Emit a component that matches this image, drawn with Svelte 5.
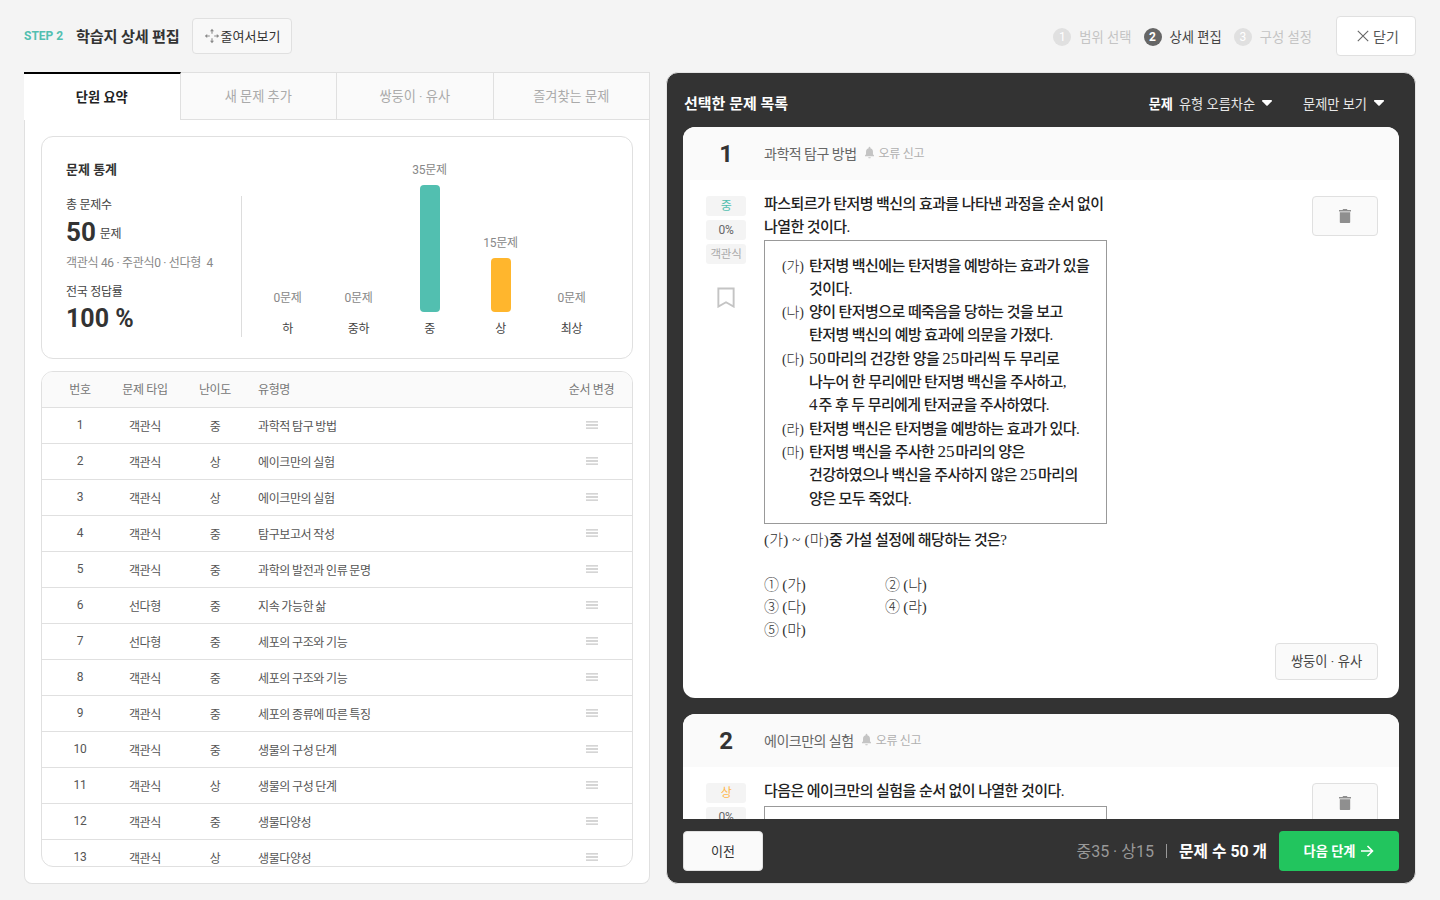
<script>
  const rows = [
    [1,'객관식','중','과학적 탐구 방법'],[2,'객관식','상','에이크만의 실험'],[3,'객관식','상','에이크만의 실험'],
    [4,'객관식','중','탐구보고서 작성'],[5,'객관식','중','과학의 발전과 인류 문명'],[6,'선다형','중','지속 가능한 삶'],
    [7,'선다형','중','세포의 구조와 기능'],[8,'객관식','중','세포의 구조와 기능'],[9,'객관식','중','세포의 종류에 따른 특징'],
    [10,'객관식','중','생물의 구성 단계'],[11,'객관식','상','생물의 구성 단계'],[12,'객관식','중','생물다양성'],[13,'객관식','상','생물다양성']
  ];
  const bars = [['0문제',0,'하',''],['0문제',0,'중하',''],['35문제',127,'중','#52bfb0'],['15문제',54,'상','#ffb62d'],['0문제',0,'최상','']];
  const tabs = ['단원 요약','새 문제 추가','쌍둥이 · 유사','즐겨찾는 문제'];
  const passage = [
    ['(가)',['탄저병 백신에는 탄저병을 예방하는 효과가 있을','것이다.']],
    ['(나)',['양이 탄저병으로 떼죽음을 당하는 것을 보고','탄저병 백신의 예방 효과에 의문을 가졌다.']],
    ['(다)',['50마리의 건강한 양을 25마리씩 두 무리로','나누어 한 무리에만 탄저병 백신을 주사하고,','4주 후 두 무리에게 탄저균을 주사하였다.']],
    ['(라)',['탄저병 백신은 탄저병을 예방하는 효과가 있다.']],
    ['(마)',['탄저병 백신을 주사한 25마리의 양은','건강하였으나 백신을 주사하지 않은 25마리의','양은 모두 죽었다.']]
  ];
  const choices = ['① (가)','② (나)','③ (다)','④ (라)','⑤ (마)'];
  const parts = (s) => s.split(/(\d+)/).filter(Boolean).map((t) => ({ t, num: /^\d+$/.test(t) }));
</script>

{#snippet bell()}
  <svg class="bell" viewBox="0 0 12 12" width="13" height="13"><path d="M6 .8c.5 0 .8.3.8.8v.4c1.600.4 2.400 1.700 2.400 3.300v2.200l1 1.300v.7H1.800v-.7l1-1.300V5.300c0-1.600.8-2.900 2.400-3.300v-.4c0-.5.3-.8.8-.8zM4.800 10.300h2.400C7.100 11 6.600 11.400 6 11.400s-1.100-.4-1.200-1.100z" fill="#c4c4c4"/></svg>
{/snippet}
{#snippet trash()}
  <svg viewBox="0 0 14 16" width="14" height="16"><path d="M4.800 1h4.400v1H13v1.500H1V2h3.800zM1.800 4.200h10.400V14c0 .6-.4 1-1 1H2.800c-.6 0-1-.4-1-1z" fill="#8f8f8f"/></svg>
{/snippet}
{#snippet caret()}
  <svg viewBox="0 0 12 8" width="12" height="8"><path d="M1.800 1h8.400c.7 0 1 .7.6 1.200L6.700 6.400c-.4.400-1 .4-1.400 0L1.200 2.200C.8 1.700 1.100 1 1.800 1z" fill="#fff"/></svg>
{/snippet}
{#snippet grip()}
  <svg class="grip" viewBox="0 0 12 8" width="12" height="8" fill="none" stroke="#c8c8c8" stroke-width="1.300"><path d="M0 .8h12M0 4h12M0 7.200h12"/></svg>
{/snippet}

<div class="page">
  <header class="top">
    <div class="top-left">
      <span class="step">STEP 2</span>
      <h1>학습지 상세 편집</h1>
      <button class="zoom-btn">
        <svg viewBox="0 0 16 16" width="16" height="16" fill="none" stroke="#8a8a8a" stroke-width="1.100"><path d="M8 .8 10 3.200H6zM8 15.200 6 12.800h4zM.8 8 3.200 6v4zM15.200 8 12.800 10V6z" fill="#8a8a8a" stroke="none"/><path d="M8 3v2.800M8 10.200V13M3 8h2.800M10.200 8H13"/></svg>
        줄여서보기
      </button>
    </div>
    <div class="top-right">
      <div class="stepper">
        <span class="st off"><i>1</i>범위 선택</span>
        <span class="st on"><i>2</i>상세 편집</span>
        <span class="st off"><i>3</i>구성 설정</span>
      </div>
      <button class="close">
        <svg viewBox="0 0 12 12" width="12" height="12" fill="none" stroke="#666" stroke-width="1.100"><path d="M.8.800l10.400 10.400M11.200.800.800 11.200"/></svg>
        닫기
      </button>
    </div>
  </header>

  <main class="main">
    <section class="left">
      <nav class="tabs">
        {#each tabs as t, i}
          <div class="tab" class:active={i === 0}>{t}</div>
        {/each}
      </nav>
      <div class="left-body">
        <div class="stats">
          <div class="stats-l">
            <h2>문제 통계</h2>
            <div class="lbl">총 문제수</div>
            <div class="big"><b>50</b><span>문제</span></div>
            <div class="sub">객관식 46 · 주관식0 · 선다형 &nbsp;4</div>
            <div class="lbl rate">전국 정답률</div>
            <div class="big pct"><b>100 %</b></div>
          </div>
          <div class="chart">
            {#each bars as b}
              <div class="col">
                <div class="val" class:zero={!b[1]}>{b[0]}</div>
                {#if b[1]}<div class="bar" style="height:{b[1]}px;background:{b[3]}"></div>{/if}
                <div class="name">{b[2]}</div>
              </div>
            {/each}
          </div>
        </div>
        <div class="table">
          <div class="tr th">
            <div>번호</div><div>문제 타입</div><div>난이도</div><div class="l">유형명</div><div>순서 변경</div>
          </div>
          {#each rows as r}
            <div class="tr">
              <div>{r[0]}</div><div>{r[1]}</div><div>{r[2]}</div><div class="l">{r[3]}</div>
              <div class="drag">{@render grip()}</div>
            </div>
          {/each}
        </div>
      </div>
    </section>

    <section class="right">
      <div class="r-head">
        <h2>선택한 문제 목록</h2>
        <div class="r-ctrl">
          <span class="sort"><b>문제</b><span>유형 오름차순</span>{@render caret()}</span>
          <span class="sort"><span>문제만 보기</span>{@render caret()}</span>
        </div>
      </div>
      <div class="scroll">
        <article class="q">
          <div class="q-head">
            <div class="no">1</div>
            <span class="ty">과학적 탐구 방법</span>
            {@render bell()}
            <span class="rep">오류 신고</span>
          </div>
          <div class="q-body first">
            <div class="meta">
              <span class="badge teal">중</span>
              <span class="badge">0%</span>
              <span class="badge gray">객관식</span>
              <svg class="mark" viewBox="0 0 20 22" width="20" height="21" fill="none" stroke="#c4c4c4" stroke-width="2"><path d="M2 1.500h16v19l-8-4.500-8 4.500z"/></svg>
            </div>
            <div class="content">
              <p class="qt">파스퇴르가 탄저병 백신의 효과를 나타낸 과정을 순서 없이<br/>나열한 것이다.</p>
              <div class="box">
                {#each passage as p}
                  <div class="pi">
                    <span class="pl">{p[0]}</span>
                    <div>{#each p[1] as l}<div>{#each parts(l) as x}{#if x.num}<span class="num">{x.t}</span>{:else}{x.t}{/if}{/each}</div>{/each}</div>
                  </div>
                {/each}
              </div>
              <p class="ask"><span class="pl wide">(가) ~ (마)</span>중 가설 설정에 해당하는 것은?</p>
              <div class="choices">
                {#each choices as c}<div class="pl">{c}</div>{/each}
              </div>
            </div>
            <div class="acts">
              <button class="del">{@render trash()}</button>
              <button class="twin">쌍둥이 · 유사</button>
            </div>
          </div>
        </article>
        <article class="q">
          <div class="q-head">
            <div class="no">2</div>
            <span class="ty">에이크만의 실험</span>
            {@render bell()}
            <span class="rep">오류 신고</span>
          </div>
          <div class="q-body">
            <div class="meta">
              <span class="badge orange">상</span>
              <span class="badge">0%</span>
            </div>
            <div class="content">
              <p class="qt">다음은 에이크만의 실험을 순서 없이 나열한 것이다.</p>
              <div class="box second"></div>
            </div>
            <div class="acts">
              <button class="del">{@render trash()}</button>
            </div>
          </div>
        </article>
      </div>
      <div class="r-foot">
        <button class="prev">이전</button>
        <div class="foot-r">
          <span class="cnt">중35 · 상15</span>
          <span class="pipe"></span>
          <b class="tot">문제 수 50 개</b>
          <button class="next">다음 단계
            <svg viewBox="0 0 14 14" width="14" height="14" fill="none" stroke="#fff" stroke-width="1.600"><path d="M1 7h11.500M7.500 2l5 5-5 5"/></svg>
          </button>
        </div>
      </div>
    </section>
  </main>
</div>

<style>
  :global(body) { margin: 0; background: #f4f4f4; }
  .page { width: 1440px; height: 900px; overflow: hidden; display: flex; flex-direction: column; font-family: Roboto, "Noto Sans CJK KR", sans-serif; color: #333; }
  button { font-family: inherit; cursor: pointer; }
  h1, h2, p { margin: 0; }

  .top { height: 72px; padding: 0 24px; box-sizing: border-box; display: flex; justify-content: space-between; align-items: center; }
  .top-left { display: flex; align-items: center; }
  .step { font-size: 12px; font-weight: 700; color: #52bfb0; width: 52px; }
  h1 { font-size: 15.200px; font-weight: 700; color: #333; letter-spacing: -0.2px; width: 116px; padding-bottom: 2px; }
  .zoom-btn { width: 100px; height: 36px; box-sizing: border-box; background: #f8f8f8; border: 1px solid #e0e0e0; border-radius: 4px; font-size: 13px; color: #333; display: flex; align-items: center; justify-content: center; gap: 1px; padding: 0 0 1px; }
  .top-right { display: flex; align-items: center; gap: 24px; }
  .stepper { display: flex; gap: 12px; margin-top: 1px; }
  .st { display: flex; align-items: center; gap: 8px; font-size: 13.300px; }
  .st i { width: 18px; height: 18px; border-radius: 50%; font-style: normal; font-size: 12px; display: flex; align-items: center; justify-content: center; color: #fff; }
  .st.off { color: #c4c4c4; }
  .st.off i { background: #e0e0e0; }
  .st.on { color: #444; }
  .st.on i { background: #666; font-weight: 700; }
  .close { width: 80px; height: 40px; box-sizing: border-box; background: #fff; border: 1px solid #e0e0e0; border-radius: 4px; font-size: 14px; color: #555; display: flex; align-items: center; justify-content: center; gap: 4px; padding: 0 0 1px 4px; }

  .main { display: flex; gap: 16px; padding: 0 24px; height: 812px; }
  .left { width: 626px; box-sizing: border-box; background: #fff; border: 1px solid #e0e0e0; border-top: 0; border-radius: 0 0 8px 8px; display: flex; flex-direction: column; }
  .tabs { display: grid; grid-template-columns: repeat(4, 1fr); margin: 0 -1px; height: 48px; }
  .tab { display: flex; align-items: center; justify-content: center; font-size: 13.200px; color: #aaa; background: #fafafa; border-top: 1px solid #e0e0e0; border-right: 1px solid #e0e0e0; border-bottom: 1px solid #e0e0e0; padding-bottom: 1px; }
  .tab.active { background: #fff; color: #222; font-weight: 700; border-top: 2px solid #000; border-bottom: 0; padding-bottom: 2px; }
  .left-body { padding: 16px; display: flex; flex-direction: column; gap: 12px; flex: 1; min-height: 0; }

  .stats { height: 223px; box-sizing: border-box; border: 1px solid #e0e0e0; border-radius: 12px; display: flex; padding: 0 0 0 24px; flex: none; }
  .stats-l { width: 175px; padding-top: 24px; }
  h2 { font-size: 13px; font-weight: 700; line-height: 18px; color: #333; }
  .lbl { font-size: 12px; letter-spacing: -0.3px; line-height: 16px; color: #444; margin-top: 18px; }
  .lbl.rate { margin-top: 13px; }
  .big { display: flex; align-items: center; gap: 4px; margin-top: 5px; height: 28px; }
  .big b { font-size: 26px; line-height: 28px; font-weight: 700; color: #333; }
  .big span { font-size: 12px; letter-spacing: -0.3px; color: #444; }
  .big.pct { margin-top: 5px; }
  .big.pct b { font-size: 25px; }
  .sub { font-size: 12px; letter-spacing: -0.3px; color: #888; line-height: 16px; margin-top: 9px; white-space: nowrap; }
  .chart { width: 355px; margin-top: 59px; height: 141px; border-left: 1px solid #ddd; padding-left: 10px; display: flex; }
  .col { width: 71px; display: flex; flex-direction: column; align-items: center; justify-content: flex-end; }
  .val { font-size: 12px; letter-spacing: -0.3px; color: #888; line-height: 16px; margin-bottom: 7px; white-space: nowrap; }
  .val.zero { margin-bottom: 6px; }
  .bar { width: 20px; border-radius: 4px; flex: none; }
  .name { font-size: 12px; letter-spacing: -0.3px; color: #444; height: 25px; line-height: 16px; padding-top: 9px; box-sizing: border-box; }

  .table { flex: 1; min-height: 0; border: 1px solid #e0e0e0; border-radius: 12px; overflow: hidden; }
  .tr { display: grid; grid-template-columns: 76px 54px 86px 1fr 81px; height: 36px; box-sizing: border-box; border-bottom: 1px solid #e0e0e0; align-items: center; text-align: center; font-size: 12px; letter-spacing: -0.3px; color: #555; padding-bottom: 1px; }
  .tr.th { background: #fafafa; color: #777; padding-bottom: 2px; }
  .tr > div { white-space: nowrap; }
  .l { text-align: left; letter-spacing: -0.4px; word-spacing: -0.5px; }
  .drag { display: flex; justify-content: center; }
  .grip { display: block; }

  .right { width: 750px; box-sizing: border-box; background: #333; border: 1px solid #e4e4e4; border-radius: 12px; display: flex; flex-direction: column; overflow: hidden; padding: 0 16px; }
  .r-head { height: 54px; flex: none; display: flex; align-items: center; justify-content: space-between; padding-top: 6px; box-sizing: border-box; }
  .r-head h2 { font-size: 15px; color: #fff; padding: 1px 0 0 1px; }
  .r-ctrl { display: flex; gap: 30px; padding-right: 14px; }
  .sort { display: flex; align-items: center; gap: 6px; font-size: 13.200px; color: #e8e8e8; }
  .sort b { color: #fff; font-weight: 700; }
  .scroll { flex: 1; min-height: 0; overflow: hidden; display: flex; flex-direction: column; gap: 16px; }
  .q { background: #fff; border-radius: 12px; flex: none; }
  .q-head { height: 53px; background: #fafafa; border-radius: 12px 12px 0 0; display: flex; align-items: center; font-size: 14px; letter-spacing: -0.5px; color: #666; }
  .no { width: 81px; box-sizing: border-box; padding-left: 5px; text-align: center; font-size: 24px; font-weight: 700; color: #333; }
  .ty { padding-bottom: 1px; }
  .bell { margin: 0 3px 2px 6px; }
  .rep { font-size: 12px; letter-spacing: -0.3px; color: #b0b0b0; padding-bottom: 2px; }
  .q-body { display: flex; padding: 16px 21px 18px 23px; }
  .q-body.first { height: 518px; box-sizing: border-box; }
  .meta { width: 40px; flex: none; display: flex; flex-direction: column; gap: 4px; align-items: center; }
  .badge { width: 40px; height: 20px; background: #f4f4f4; border-radius: 3px; font-size: 12px; letter-spacing: -0.3px; line-height: 20px; text-align: center; color: #666; }
  .badge.teal { color: #52bfb0; }
  .badge.orange { color: #ffb74d; }
  .badge.gray { color: #aaa; font-size: 11.500px; }
  .mark { margin-top: 19px; }
  .content { width: 343px; margin-left: 18px; flex: none; font-family: "Liberation Serif", "Noto Sans CJK KR", serif; color: #222; font-size: 15px; line-height: 23.300px; letter-spacing: -0.58px; font-weight: 500; }
  .qt { white-space: nowrap; margin-top: -3px; }
  .box { border: 1px solid #999; width: 343px; height: 284px; box-sizing: border-box; margin-top: 0; padding: 14px 17px; white-space: nowrap; }
  .box.second { margin-top: 3px; }
  .pi { display: flex; }
  .pl { font-weight: 300; color: #333; letter-spacing: -0.2px; }
  .pi .pl { width: 27px; flex: none; font-size: 14px; }
  .num { font-size: 17px; line-height: 1; font-weight: 400; letter-spacing: 0; padding-right: 1px; }
  .wide { letter-spacing: 0.2px; }
  .ask { margin-top: 5px; white-space: nowrap; }
  .choices { display: grid; grid-template-columns: 121px 120px; margin-top: 22px; line-height: 22.500px; }
  .acts { flex: 1; display: flex; flex-direction: column; align-items: flex-end; justify-content: space-between; }
  .del { width: 66px; height: 40px; background: #fafafa; border: 1px solid #e0e0e0; border-radius: 4px; padding: 0; display: flex; align-items: center; justify-content: center; flex: none; }
  .twin { width: 103px; height: 37px; background: #fafafa; border: 1px solid #e0e0e0; border-radius: 4px; font-size: 13.300px; color: #444; padding: 0 0 2px; }

  .r-foot { height: 64px; flex: none; background: #333; display: flex; align-items: center; justify-content: space-between; }
  .prev { width: 80px; height: 40px; background: #fafafa; border: 1px solid #e0e0e0; border-radius: 4px; font-size: 13px; color: #333; padding: 0 0 1px; }
  .foot-r { display: flex; align-items: center; }
  .cnt { font-size: 16px; color: #999; padding-bottom: 2px; }
  .pipe { width: 1px; height: 14px; background: #999; margin: 0 12px; }
  .tot { font-size: 15.800px; color: #fff; font-weight: 700; margin-right: 12px; padding-bottom: 2px; }
  .next { width: 120px; height: 40px; background: #22c55e; border: 0; border-radius: 4px; font-size: 13.200px; font-weight: 700; color: #fff; display: flex; align-items: center; justify-content: center; gap: 5px; padding: 0 0 1px; }
</style>
